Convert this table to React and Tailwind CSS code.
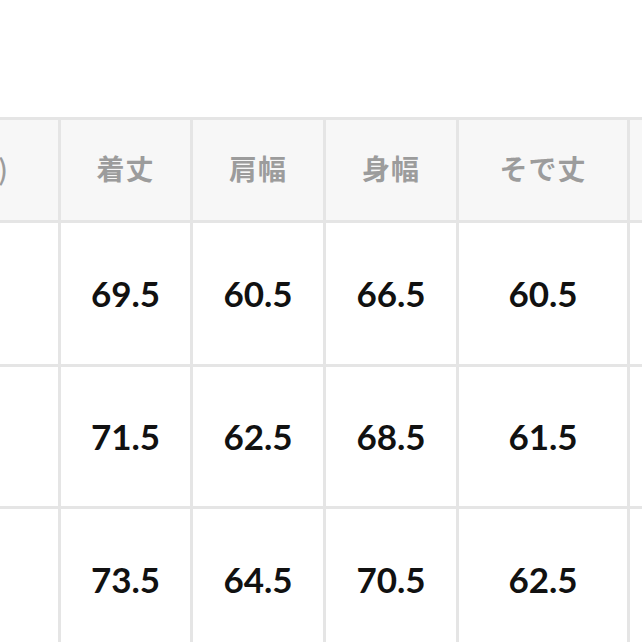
import React from 'react';

const headers = ['着丈', '肩幅', '身幅', 'そで丈', '袖丈'];

const rows = [
  { size: 'S', values: ['69.5', '60.5', '66.5', '60.5', '60.5'] },
  { size: 'M', values: ['71.5', '62.5', '68.5', '61.5', '61.5'] },
  { size: 'L', values: ['73.5', '64.5', '70.5', '62.5', '62.5'] },
];

export default function App() {
  return (
    <div className="w-[642px] h-[642px] overflow-hidden bg-white pt-[117px]">
      {/* サイズ表 (左端は画面外にはみ出している) */}
      <div className="ml-[-102px] w-max bg-[#e5e5e5] pt-[3px] grid grid-cols-[160px_129px_130px_130px_168px_130px] grid-rows-[100px_141px_139px_141px] gap-[3px]">
        <div className="bg-[#f7f7f7] flex items-center justify-end pr-[50px] pb-[4px] whitespace-nowrap text-[28px] font-medium text-[#9c9c9c] font-['Noto_Sans_CJK_JP',sans-serif]">
          <span>サイズ(cm)</span>
        </div>
        {headers.map((h) => (
          <div
            key={h}
            className="bg-[#f7f7f7] flex items-center justify-center pb-[4px] whitespace-nowrap text-[28px] font-bold tracking-[1px] text-[#9c9c9c] font-['Noto_Sans_CJK_JP',sans-serif]"
          >
            {h}
          </div>
        ))}

        {rows.map((r) => (
          <React.Fragment key={r.size}>
            <div className="bg-white flex items-center justify-start pl-[20px] text-[34px] font-bold text-[#111] font-['Lato',sans-serif]">
              {r.size}
            </div>
            {r.values.map((v, i) => (
              <div
                key={i}
                className="bg-white flex items-center justify-center text-[35px] font-bold text-[#111] font-['Lato',sans-serif]"
              >
                {v}
              </div>
            ))}
          </React.Fragment>
        ))}
      </div>
    </div>
  );
}
